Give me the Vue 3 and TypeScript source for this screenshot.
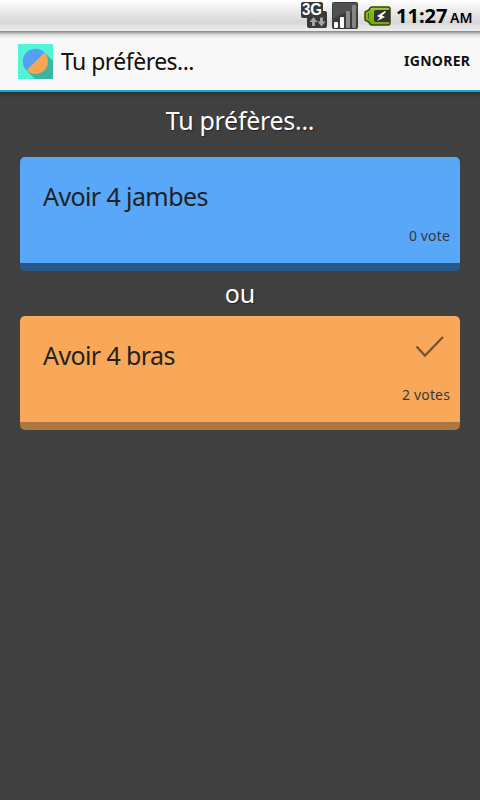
<script setup lang="ts">
interface Choice {
  id: string
  label: string
  votes: string
  selected: boolean
}

const title = 'Tu préfères...'
const choices: Choice[] = [
  { id: 'blue', label: 'Avoir 4 jambes', votes: '0 vote', selected: false },
  { id: 'orange', label: 'Avoir 4 bras', votes: '2 votes', selected: true },
]
</script>

<template>
  <div class="screen">
    <div class="status">
      <svg class="network" width="28" height="28" viewBox="0 0 28 28">
        <path d="M3 1h18q2 0 2 2v7h2q2 0 2 2v13q0 2-2 2H9q-2 0-2-2v-8H3q-2 0-2-2V3q0-2 2-2z" fill="#393939" />
        <text x="2" y="14" textLength="20" lengthAdjust="spacingAndGlyphs" class="network-label">3G</text>
        <path d="M12 25v-4h-2.500l4-5 4 5H15v4zM20 16.500h3v4h2.500l-4 5-4-5H20z" fill="#a5a5a5" />
      </svg>
      <svg class="signal" width="26" height="27" viewBox="0 0 26 27">
        <rect width="26" height="27" rx="2" fill="#3b3b3b" />
        <path d="M1 1h24v8Q12 9 1 17z" fill="#515151" />
        <rect x="2" y="20" width="4" height="6" rx="1" fill="#fff" />
        <rect x="8" y="15" width="4" height="11" rx="1" fill="#fff" />
        <rect x="14" y="9" width="4" height="17" rx="1" fill="#8b8b8b" />
        <rect x="20" y="3" width="4" height="23" rx="1" fill="#858585" />
      </svg>
      <svg class="battery" width="27" height="21" viewBox="0 0 27 21">
        <defs>
          <linearGradient id="charge" x2="0" y2="1">
            <stop offset="0" stop-color="#a6d83a" />
            <stop offset=".2" stop-color="#85bd12" />
            <stop offset="1" stop-color="#78aa05" />
          </linearGradient>
        </defs>
        <path d="M8 1h16q2 0 2 2v14q0 2-2 2H8q-2 0-3-3L3 15q-2 0-2-2V7q0-2 2-2l2-1q1-3 3-3z" fill="url(#charge)" stroke="#344113" stroke-width="1.500" />
        <path d="M4.500 7v6" stroke="#47651a" stroke-width="1" />
        <path d="M12 4h14v12H12q-2 0-2-2V6q0-2 2-2z" fill="#333" />
        <path d="M21 5l-8 5 3 1.500-3 3.500 8-4-3-1.500 4-3.500z" fill="#fff" />
      </svg>
      <span class="clock">11:27</span><span class="meridiem">AM</span>
    </div>
    <header class="bar">
      <svg class="logo" width="35" height="35" viewBox="0 0 35 35">
        <rect width="35" height="35" fill="#51f5d5" />
        <path d="M26.500 8.500L35 17v18H17L8.500 26.500z" fill="#3ab89f" />
        <circle cx="17.500" cy="17.500" r="12.500" fill="#f8a556" />
        <path d="M26.500 8.500A12.600 12.600 0 0 0 8.500 26.500z" fill="#559ff5" />
      </svg>
      <h1 class="bar-title">{{ title }}</h1>
      <button class="skip" type="button">IGNORER</button>
    </header>
    <main class="content">
      <h2 class="question">{{ title }}</h2>
      <template v-for="(choice, index) in choices" :key="choice.id">
        <p v-if="index > 0" class="or">ou</p>
        <section class="card" :class="choice.id">
          <div class="label">{{ choice.label }}</div>
          <svg v-if="choice.selected" class="check" width="30" height="24" viewBox="0 0 30 24">
            <path d="M1.500 11.500L10 20.500L28 2" fill="none" stroke="#7a522b" stroke-width="2.300" />
          </svg>
          <div class="votes">{{ choice.votes }}</div>
        </section>
      </template>
    </main>
  </div>
</template>

<style>
body {
  background: #404040;
}
</style>

<style scoped>
.screen {
  width: 480px;
  height: 800px;
  overflow: hidden;
  background: #404040;
  font-family: "Noto Sans", sans-serif;
}
.status {
  box-sizing: border-box;
  height: 31px;
  display: flex;
  align-items: flex-start;
  padding: 1px 0 0 300px;
  color: #000;
  background: linear-gradient(#fff 0, #eee 30%, #d8d8d8 72%, #eee 100%);
}
.network-label {
  font: bold 16px "Liberation Sans", sans-serif;
  fill: #fff;
}
.signal {
  margin: 1px 0 0 4px;
}
.battery {
  margin: 5px 0 0 6px;
}
.clock {
  margin-left: 5px;
  font-size: 20px;
  line-height: 30px;
  font-weight: 700;
  width: 52px;
  white-space: nowrap;
}
.meridiem {
  margin-left: 2px;
  font-size: 14px;
  line-height: 33px;
  font-weight: 600;
}
.bar {
  box-sizing: border-box;
  height: 61px;
  display: flex;
  align-items: center;
  padding: 0 10px 0 18px;
  border-bottom: 2px solid #12a5dc;
  background: linear-gradient(#858585 0, #b5b5b5 2px, #e2e2e2 4px, #f8f8f8 8px);
}
.logo {
  margin-top: 1px;
}
.bar-title {
  flex: 1;
  margin: 1px 0 0 8px;
  font-size: 23px;
  line-height: 32px;
  font-weight: 400;
  letter-spacing: -0.53px;
  color: #111;
}
.skip {
  padding: 0;
  border: 0;
  background: none;
  font: 700 14px/20px "Noto Sans", sans-serif;
  letter-spacing: 0.28px;
  margin-right: -0.28px;
  color: #111;
}
.content {
  padding: 0 20px;
  background: linear-gradient(#303030 0, #404040 6px);
}
.question,
.or {
  margin: 0;
  font-size: 25px;
  font-weight: 400;
  text-align: center;
  color: #fff;
  text-shadow: 1px 1px 1px #222;
}
.question {
  height: 65px;
  line-height: 57px;
  letter-spacing: -0.3px;
}
.or {
  height: 45px;
  line-height: 45px;
}
.card {
  box-sizing: border-box;
  height: 114px;
  display: grid;
  grid-template-columns: 1fr auto;
  grid-template-rows: 67px 24px;
  padding: 0 10px 0 23px;
  border-radius: 5px;
  color: #222;
}
.blue {
  background: linear-gradient(#58a7f9, #58a7f9) top / 100% 106px no-repeat, #285888;
}
.orange {
  background: linear-gradient(#f9a85a, #f9a85a) top / 100% 106px no-repeat, #ae7740;
}
.label {
  font-size: 25px;
  line-height: 78px;
  letter-spacing: -0.6px;
}
.check {
  margin: 19px 5px 0 0;
}
.votes {
  grid-column: 1 / 3;
  grid-row: 2;
  font-size: 14px;
  line-height: 23px;
  letter-spacing: 0.15px;
  text-align: right;
  color: #383838;
}
</style>
